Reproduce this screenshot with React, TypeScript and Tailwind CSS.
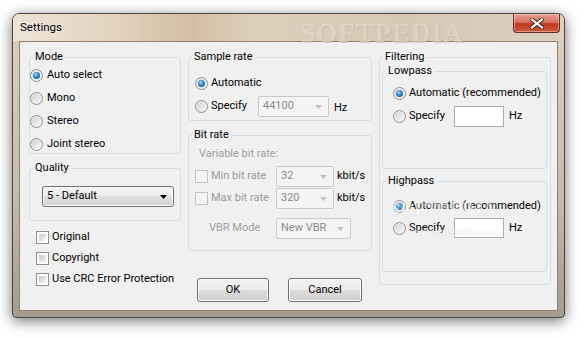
import type { ReactNode } from "react";

function Radio({ checked = false }: { checked?: boolean }) {
  return (
    <span className="flex h-[13px] w-[13px] shrink-0 items-center justify-center rounded-full border border-[#8e8f8f] bg-[linear-gradient(135deg,#cdcdcd,#fbfbfb)] shadow-[inset_0_0_0_1px_#f2f2f2]">
      {checked && (
        <span className="h-[7px] w-[7px] rounded-full bg-[radial-gradient(circle_at_40%_35%,#a6dcf8_0%,#2a86c9_45%,#0d4f8b_100%)]" />
      )}
    </span>
  );
}

function Check({ disabled = false }: { disabled?: boolean }) {
  return (
    <span
      className={
        disabled
          ? "h-[13px] w-[13px] shrink-0 border border-[#c4c4c4] bg-[#f4f4f4]"
          : "h-[13px] w-[13px] shrink-0 border border-[#8e8f8f] bg-white p-[2px]"
      }
    >
      {!disabled && <span className="block h-full w-full bg-[linear-gradient(135deg,#c9c9c9,#f4f4f4)]" />}
    </span>
  );
}

function Arrow({ color }: { color: string }) {
  return (
    <svg width="7" height="4" viewBox="0 0 7 4" className="shrink-0">
      <path d="M0 0h7L3.5 4z" fill={color} />
    </svg>
  );
}

function Combo({ value, className, disabled = false }: { value: string; className: string; disabled?: boolean }) {
  return (
    <div
      className={
        disabled
          ? `flex h-[21px] shrink-0 items-center justify-between rounded-[2px] border border-[#cacaca] bg-[#f4f4f4] pl-[4px] pr-[6px] text-[#8a8a8a] ${className}`
          : `flex h-[21px] shrink-0 items-center justify-between rounded-[3px] border border-[#707070] bg-[linear-gradient(#f3f3f3_0%,#ececec_50%,#dfdfdf_50%,#d3d3d3_100%)] pl-[4px] pr-[6px] shadow-[inset_0_0_0_1px_#fbfbfb] ${className}`
      }
    >
      <span>{value}</span>
      <Arrow color={disabled ? "#c2c2c2" : "#000"} />
    </div>
  );
}

function Group({ title, className, children }: { title: string; className: string; children: ReactNode }) {
  return (
    <fieldset className={`shrink-0 rounded-[3px] border border-[#d5dfe5] ${className}`}>
      <legend className="ml-[3px] px-[2px] leading-[14px]">{title}</legend>
      {children}
    </fieldset>
  );
}

function Btn({ children, className }: { children: ReactNode; className: string }) {
  return (
    <button className={`h-[24px] rounded-[3px] border border-[#707070] bg-[linear-gradient(#f2f2f2_0%,#ebebeb_50%,#dddddd_50%,#cfcfcf_100%)] shadow-[inset_0_0_0_1px_#fcfcfc] ${className}`}>
      {children}
    </button>
  );
}

function Field({ className }: { className: string }) {
  return <div className={`shrink-0 border border-[#abadb3] bg-white ${className}`} />;
}

export default function App() {
  return (
    <div className="h-[338px] w-[585px] overflow-hidden bg-white pl-[12px] pt-[13px] font-['Roboto','Noto_Sans',sans-serif] text-[11px] text-black">
      {/* окно */}
      <div className="flex h-[305px] w-[553px] flex-col rounded-t-[7px] rounded-b-[4px] border border-[#4a4540] bg-[linear-gradient(#ddd1c0,#c5bbae_60%,#a39a90)] shadow-[0_3px_14px_rgba(0,0,0,0.55)]">
        {/* заголовок */}
        <div className="relative flex h-[27px] shrink-0 items-start justify-between rounded-t-[6px] bg-[linear-gradient(90deg,#ede3d6_0%,#e2d3bf_18%,#d3bfa3_32%,#ddcfbb_44%,#d6c8b4_70%,#dbd0c2_100%)]">
          <span className="pl-[7px] pt-[5px] text-[11.5px] [text-shadow:0_0_6px_#fff]">Settings</span>
          <span className="pointer-events-none absolute left-[287px] top-[-1px] font-['Liberation_Serif',serif] text-[27px] font-bold tracking-[1px] text-[#e3d9cc] opacity-60 [text-shadow:1px_1px_1px_#c4b6a3]">
            SOFTPEDIA
          </span>
          <div className="relative mr-[4px] flex h-[19px] w-[47px] items-center justify-center rounded-b-[4px] border border-t-0 border-[#6a2a21] bg-[linear-gradient(#e8a191_0%,#d9735e_45%,#c1361f_55%,#cf5b40_100%)] shadow-[inset_0_0_0_1px_rgba(255,255,255,0.35)]">
            <svg width="14" height="11" viewBox="0 0 14 11">
              <path d="M2 1.5L12 9.5M12 1.5L2 9.5" stroke="#3b2a28" strokeWidth="4" strokeLinecap="square" />
              <path d="M2 1.5L12 9.5M12 1.5L2 9.5" stroke="#f4f4f4" strokeWidth="2.2" strokeLinecap="square" />
            </svg>
          </div>
        </div>

        {/* клиентская область */}
        <div className="mx-[6px] flex h-[270px] border border-[#8c8276] bg-[#f0f0f0] pl-[9px] pt-[8px]">
          {/* левая колонка */}
          <div className="flex w-[152px] shrink-0 flex-col">
            <Group title="Mode" className="h-[104px] w-[152px]">
              <div className="flex flex-col gap-[7px] pt-[3px]">
                {[
                  { t: "Auto select", c: true },
                  { t: "Mono", c: false },
                  { t: "Stereo", c: false },
                  { t: "Joint stereo", c: false },
                ].map((r) => (
                  <div key={r.t} className="flex h-[16px] items-center gap-[4px]">
                    <Radio checked={r.c} />
                    <span>{r.t}</span>
                  </div>
                ))}
              </div>
            </Group>
            <Group title="Quality" className="mt-[7px] h-[60px] w-[152px]">
              <div className="pl-[12px] pt-[11px]">
                <Combo value="5 - Default" className="w-[132px]" />
              </div>
            </Group>
            <div className="mt-[8px] flex flex-col gap-[5px] pl-[7px]">
              {["Original", "Copyright", "Use CRC Error Protection"].map((t) => (
                <div key={t} className="flex h-[16px] items-center gap-[3px]">
                  <Check />
                  <span>{t}</span>
                </div>
              ))}
            </div>
          </div>

          {/* средняя колонка */}
          <div className="ml-[7px] flex w-[184px] shrink-0 flex-col">
            <Group title="Sample rate" className="h-[71px] w-[184px]">
              <div className="flex flex-col gap-[3px] pl-[6px] pt-[9px]">
                <div className="flex h-[20px] items-center gap-[3px]">
                  <Radio checked />
                  <span>Automatic</span>
                </div>
                <div className="flex h-[21px] items-center">
                  <div className="flex w-[63px] items-center gap-[3px]">
                    <Radio />
                    <span>Specify</span>
                  </div>
                  <Combo value="44100" className="w-[71px]" disabled />
                  <span className="ml-[5px] mt-[4px]">Hz</span>
                </div>
              </div>
            </Group>
            <Group title="Bit rate" className="mt-[7px] h-[123px] w-[184px]">
              <div className="flex flex-col pl-[6px] pt-[5px]">
                <span className="pl-[4px] leading-[14px] text-[#a0a0a0]">Variable bit rate:</span>
                {[
                  { t: "Min bit rate", v: "32", m: "mt-[5px]" },
                  { t: "Max bit rate", v: "320", m: "mt-[1px]" },
                ].map((r) => (
                  <div key={r.t} className={`flex h-[21px] items-center ${r.m}`}>
                    <div className="flex w-[81px] items-center gap-[3px] text-[#9a9a9a]">
                      <Check disabled />
                      <span>{r.t}</span>
                    </div>
                    <Combo value={r.v} className="w-[58px]" disabled />
                    <span className="ml-[3px] -mt-[1px]">kbit/s</span>
                  </div>
                ))}
                <div className="mt-[9px] flex h-[21px] items-center">
                  <span className="w-[81px] pl-[14px] text-[#a0a0a0]">VBR Mode</span>
                  <Combo value="New VBR" className="w-[75px]" disabled />
                </div>
              </div>
            </Group>
            <div className="mt-[27px] flex gap-[19px] pl-[9px]">
              <Btn className="w-[72px]">OK</Btn>
              <Btn className="w-[74px]">Cancel</Btn>
            </div>
          </div>

          {/* правая колонка */}
          <div className="relative ml-[7px] w-[172px] shrink-0">
            <Group title="Filtering" className="h-[235px] w-[172px]">
              <div className="flex flex-col pl-[2px]">
                <Group title="Lowpass" className="h-[105px] w-[165px]">
                  <div className="flex flex-col gap-[3px] pl-[10px] pt-[5px]">
                    <div className="flex h-[20px] items-center gap-[3px]">
                      <Radio checked />
                      <span>Automatic (recommended)</span>
                    </div>
                    <div className="flex h-[21px] items-center">
                      <div className="flex w-[61px] items-center gap-[3px]">
                        <Radio />
                        <span>Specify</span>
                      </div>
                      <Field className="h-[21px] w-[50px]" />
                      <span className="ml-[5px]">Hz</span>
                    </div>
                  </div>
                </Group>
                <Group title="Highpass" className="mt-[5px] h-[98px] w-[165px]">
                  <div className="flex flex-col gap-[2px] pl-[10px] pt-[8px]">
                    <div className="flex h-[20px] items-center gap-[3px]">
                      <Radio checked />
                      <span>Automatic (recommended)</span>
                    </div>
                    <div className="flex h-[20px] items-center">
                      <div className="flex w-[61px] items-center gap-[3px]">
                        <Radio />
                        <span>Specify</span>
                      </div>
                      <Field className="h-[20px] w-[50px]" />
                      <span className="ml-[5px]">Hz</span>
                    </div>
                  </div>
                </Group>
              </div>
            </Group>
            {/* водяной знак */}
            <span className="pointer-events-none absolute left-[11px] top-[149px] font-['Liberation_Serif',serif] text-[17px] font-bold leading-[20px] tracking-[1px] text-white opacity-50 [text-shadow:0_0_2px_#cfcfcf]">
              SOFTPEDIA
            </span>
            <span className="pointer-events-none absolute left-[31px] top-[177px] text-[10px] leading-[12px] text-white opacity-60 [text-shadow:0_0_2px_#c4c4c4]">
              www.softpedia.com
            </span>
          </div>
        </div>
      </div>
    </div>
  );
}
